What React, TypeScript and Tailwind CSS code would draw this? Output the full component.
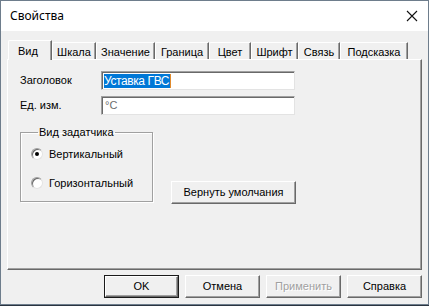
import React from "react";

const tabs = ["Вид", "Шкала", "Значение", "Граница", "Цвет", "Шрифт", "Связь", "Подсказка"];
const tabW = [44, 44, 59, 54, 42, 47, 42, 68];

function Radio({ checked }: { checked?: boolean }) {
  return (
    <div className="w-[12px] h-[12px] rounded-full bg-white border border-t-[#a0a0a0] border-l-[#a0a0a0] border-r-[#e3e3e3] border-b-[#e3e3e3] shadow-[inset_1px_1px_0_#696969] flex items-center justify-center">
      {checked && <div className="w-[4px] h-[4px] rounded-full bg-black" />}
    </div>
  );
}

function Btn({ children, def, disabled, w }: { children: React.ReactNode; def?: boolean; disabled?: boolean; w: string }) {
  return (
    <div className={`${w} h-[23px] ${def ? "border border-[#1a1a1a]" : ""} flex`}>
      <div className="flex-1 flex items-center justify-center bg-[#f0f0f0] border-t border-l border-white border-r border-b border-r-[#696969] border-b-[#696969] shadow-[inset_-1px_-1px_0_#a0a0a0]">
        <span className={disabled ? "text-[#a0a0a0] [text-shadow:1px_1px_0_#ffffff]" : "text-black"}>{children}</span>
      </div>
    </div>
  );
}

export default function App() {
  return (
    <div className="w-[429px] h-[306px] bg-[#2a3440] overflow-hidden" style={{ fontFamily: '"Liberation Sans", Arial, sans-serif' }}>
      <div className="w-[429px] h-[305px] flex flex-col border border-[#6e7d8c] bg-[#f0f0f0] text-[11px] text-black">
        <div className="h-[30px] bg-white flex items-center justify-between pl-[9px] pr-[9px] shrink-0">
          <span className="text-[12px] text-black" style={{ fontFamily: '"Noto Sans", "Open Sans", sans-serif' }}>Свойства</span>
          <svg width="12" height="12" viewBox="0 0 12 12" className="mr-[1px]">
            <path d="M1 1 L11 11 M11 1 L1 11" stroke="#111" strokeWidth="1.1" fill="none" />
          </svg>
        </div>
        <div className="flex-1 flex flex-col pl-[6px] pt-[8px]">
          <div className="flex items-end h-[20px] pl-[1px] relative z-10">
            {tabs.map((t, i) => {
              const sel = i === 0;
              return (
                <div
                  key={t}
                  style={{ width: tabW[i] }}
                  className={
                    sel
                      ? "h-[20px] -mb-[1px] bg-[#f0f0f0] border-t border-l border-white border-r border-r-[#696969] shadow-[inset_-1px_0_0_#a0a0a0] flex items-start pt-[2px] pl-[9px] rounded-tl-[2px]"
                      : "h-[17px] bg-[#f0f0f0] border-t border-l border-white border-r border-r-[#696969] shadow-[inset_-1px_0_0_#a0a0a0] flex items-start pt-[1px] justify-center rounded-tl-[2px]"
                  }
                >
                  <span>{t}</span>
                </div>
              );
            })}
          </div>
          <div className="w-[415px] h-[211px] border-t border-l border-white border-r border-b border-r-[#696969] border-b-[#696969] shadow-[inset_-1px_-1px_0_#a0a0a0] flex flex-col pl-[12px] pt-[11px]">
            <div className="flex items-center h-[19px]">
              <span className="w-[81px]">Заголовок</span>
              <div className="w-[194px] h-[19px] bg-white border border-t-[#a0a0a0] border-l-[#a0a0a0] border-r-[#e3e3e3] border-b-[#e3e3e3] shadow-[inset_1px_1px_0_#696969] flex items-center pl-[2px]">
                <span className="bg-[#0078d7] text-white leading-[14px] pr-[1px] border-r border-r-[#e08a2c] text-[12px] tracking-[-0.4px]">Уставка ГВС</span>
              </div>
            </div>
            <div className="flex items-center h-[19px] mt-[6px]">
              <span className="w-[81px]">Ед. изм.</span>
              <div className="w-[194px] h-[19px] bg-white border border-t-[#a0a0a0] border-l-[#a0a0a0] border-r-[#e3e3e3] border-b-[#e3e3e3] shadow-[inset_1px_1px_0_#696969] flex items-center pl-[3px]">
                <span className="text-[#6d6d6d]">°C</span>
              </div>
            </div>
            <div className="flex items-start mt-[11px]">
              <fieldset className="w-[133px] h-[76px] border border-[#a0a0a0] shadow-[inset_1px_1px_0_#ffffff,1px_1px_0_#ffffff] pl-[10px] flex flex-col">
                <legend className="ml-[7px] px-[1px] leading-[13px]">Вид задатчика</legend>
                <div className="flex items-center mt-[8px] h-[14px]">
                  <Radio checked />
                  <span className="ml-[6px]">Вертикальный</span>
                </div>
                <div className="flex items-center mt-[15px] h-[14px]">
                  <Radio />
                  <span className="ml-[6px]">Горизонтальный</span>
                </div>
              </fieldset>
              <div className="ml-[18px] mt-[55px]">
                <Btn w="w-[125px]">Вернуть умолчания</Btn>
              </div>
            </div>
          </div>
          <div className="flex justify-end gap-[6px] pr-[6px] mt-[5px] w-[421px]">
            <Btn w="w-[75px]" def>OK</Btn>
            <Btn w="w-[75px]">Отмена</Btn>
            <Btn w="w-[75px]" disabled>Применить</Btn>
            <Btn w="w-[75px]">Справка</Btn>
          </div>
        </div>
      </div>
    </div>
  );
}
